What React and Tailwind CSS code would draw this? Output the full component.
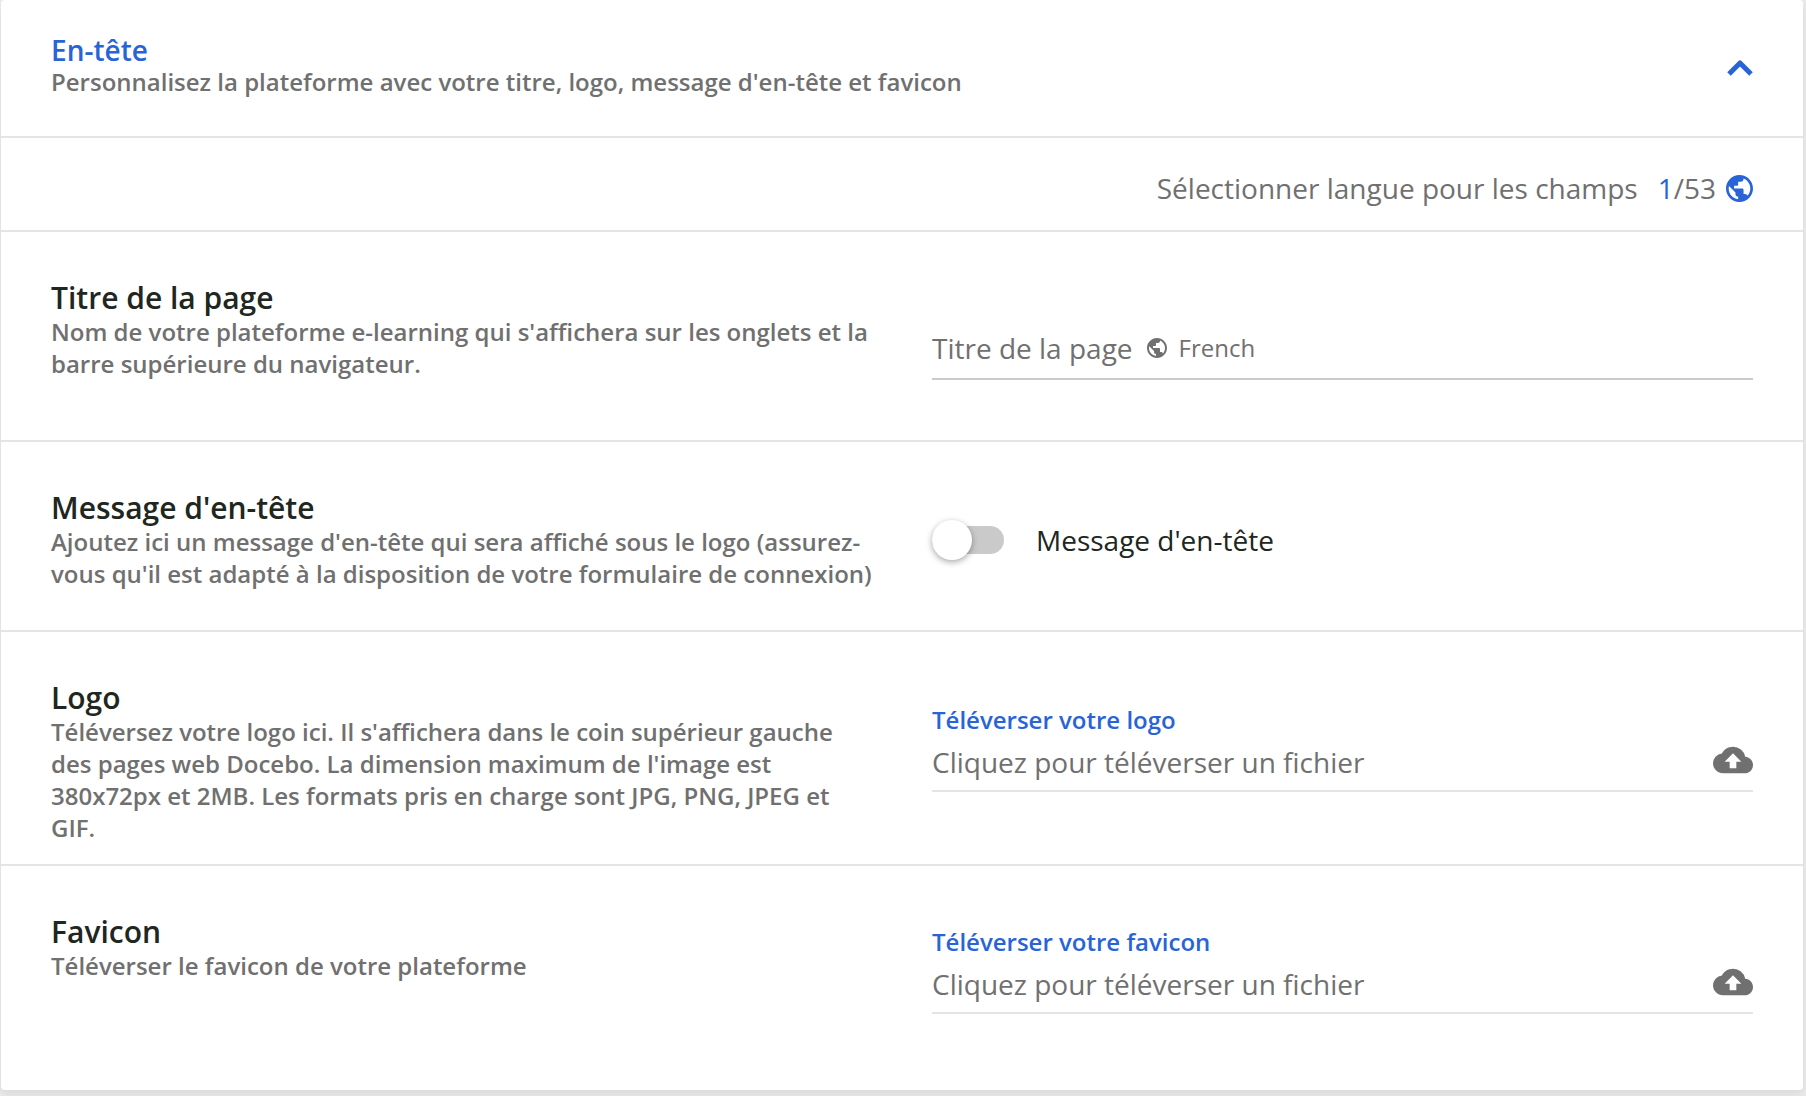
import React, { useState } from "react";
import { MdPublic, MdCloudUpload } from "react-icons/md";

const Section = ({ title, text, className, children }) => (
  <section className={`grid grid-cols-2 gap-x-[60px] px-[50px] ${className}`}>
    <div className="pt-12">
      <h2 className="text-[30px] leading-9 font-semibold text-[#202620]">{title}</h2>
      <p className="text-2xl leading-8 font-semibold text-[#707070]">{text}</p>
    </div>
    {children}
  </section>
);

const UploadField = ({ id, label, className }) => (
  <div className={className}>
    <label htmlFor={id} className="block text-2xl leading-8 font-semibold text-[#2864d7]">
      {label}
    </label>
    <button
      id={id}
      type="button"
      className="flex w-full items-center justify-between border-b-2 border-[#e4e4e4] pt-1 pb-1.5 text-left text-[28px] leading-10 text-[#707070]"
    >
      Cliquez pour téléverser un fichier
      <MdCloudUpload className="mb-1 size-10" />
    </button>
  </div>
);

const App = () => {
  const [open, setOpen] = useState(true);
  const [pageTitle, setPageTitle] = useState("");
  const [showMessage, setShowMessage] = useState(false);

  return (
    <div className="min-h-screen bg-[#ebebeb] pr-[3px] pb-1.5 pl-px font-['Open_Sans',sans-serif]">
      <main className="rounded bg-white shadow-[0_4px_10px_rgba(0,0,0,0.08)]">
        {/* Panel header */}
        <header className="flex items-center justify-between border-b-2 border-[#e4e4e4] px-[50px]">
          <div className="pt-[34px] pb-[38px]">
            <h1 className="text-[28px] leading-8 font-semibold text-[#2864d7]">En-tête</h1>
            <p className="text-2xl leading-8 font-semibold text-[#707070]">
              Personnalisez la plateforme avec votre titre, logo, message d'en-tête et favicon
            </p>
          </div>
          <button type="button" aria-label="En-tête" aria-expanded={open} onClick={() => setOpen(!open)}>
            <svg
              viewBox="0 0 26 16"
              fill="none"
              stroke="currentColor"
              strokeWidth="5"
              strokeLinejoin="round"
              className="h-4 w-[26px] text-[#2864d7]"
            >
              <path d="M2 14 13 3l11 11" />
            </svg>
          </button>
        </header>

        {open && (
          <>
            {/* Language picker */}
            <div className="flex items-center justify-end border-b-2 border-[#e4e4e4] px-[50px] pt-[30px] pb-[22px] text-[28px] leading-10 text-[#707070]">
              <span>Sélectionner langue pour les champs</span>
              <button type="button" className="ml-5 flex items-center gap-2.5">
                <span>
                  <span className="text-[#2864d7]">1</span>/53
                </span>
                <MdPublic viewBox="2 2 20 20" className="size-[27px] text-[#2864d7]" />
              </button>
            </div>

            <Section
              title="Titre de la page"
              text="Nom de votre plateforme e-learning qui s'affichera sur les onglets et la barre supérieure du navigateur."
              className="border-b-2 border-[#e4e4e4] pb-[60px]"
            >
              <div className="pt-24">
                <div className="flex items-center border-b-2 border-[#cacaca] pb-2.5 text-[#707070]">
                  <label htmlFor="page-title" className="flex items-center text-[28px] leading-10">
                    Titre de la page
                    <MdPublic viewBox="2 2 20 20" className="mr-3 ml-3.5 size-5" />
                    <span className="text-2xl">French</span>
                  </label>
                  <input
                    id="page-title"
                    type="text"
                    value={pageTitle}
                    onChange={(e) => setPageTitle(e.target.value)}
                    className="h-10 min-w-0 flex-1 px-4 text-[28px] outline-none"
                  />
                </div>
              </div>
            </Section>

            <Section
              title="Message d'en-tête"
              text="Ajoutez ici un message d'en-tête qui sera affiché sous le logo (assurez-vous qu'il est adapté à la disposition de votre formulaire de connexion)"
              className="border-b-2 border-[#e4e4e4] pb-10"
            >
              <div className="flex items-center gap-8 self-start pt-[78px]">
                <input
                  id="header-message"
                  type="checkbox"
                  role="switch"
                  checked={showMessage}
                  onChange={(e) => setShowMessage(e.target.checked)}
                  className="relative h-7 w-[72px] appearance-none rounded-full bg-[#cacaca] before:absolute before:-top-1.5 before:left-0 before:size-10 before:rounded-full before:bg-white before:shadow-[0_2px_6px_rgba(0,0,0,0.35)] checked:bg-[#2864d7] checked:before:left-8"
                />
                <label htmlFor="header-message" className="text-[28px] leading-10 text-[#202620]">
                  Message d'en-tête
                </label>
              </div>
            </Section>

            <Section
              title="Logo"
              text="Téléversez votre logo ici. Il s'affichera dans le coin supérieur gauche des pages web Docebo. La dimension maximum de l'image est 380x72px et 2MB. Les formats pris en charge sont JPG, PNG, JPEG et GIF."
              className="border-b-2 border-[#e4e4e4] pb-5"
            >
              <UploadField id="logo" label="Téléverser votre logo" className="pt-[72px]" />
            </Section>

            <Section title="Favicon" text="Téléverser le favicon de votre plateforme" className="pb-[76px]">
              <UploadField id="favicon" label="Téléverser votre favicon" className="pt-[60px]" />
            </Section>
          </>
        )}
      </main>
    </div>
  );
};

export default App;
